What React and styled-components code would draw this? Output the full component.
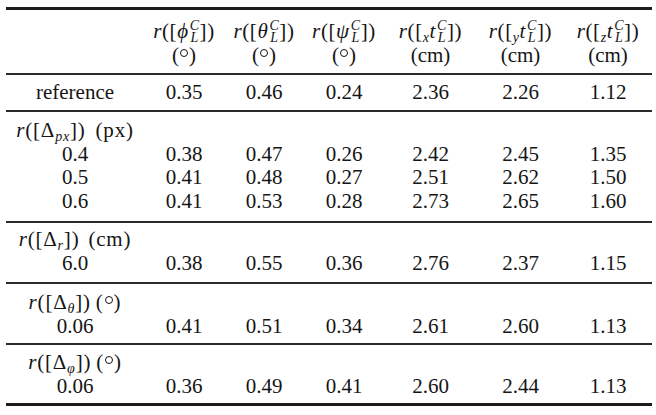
import React from "react";
import styled, { createGlobalStyle } from "styled-components";

const GlobalStyle = createGlobalStyle`
  body {
    margin: 0;
    background: #fff;
    font-family: 'Liberation Serif', 'DejaVu Serif', serif;
  }
`;

const cols = "138px 80px 80px 80px 93px 87px 88px";

const Page = styled.div`
  padding: 7px 0 0 6px;
`;

const Table = styled.div`
  width: 646px;
  border-top: 3px solid #1c1c1c;
  border-bottom: 3px solid #1c1c1c;
  color: #151515;
  font-family: 'Liberation Serif', 'DejaVu Serif', serif;
  font-size: 21px;
`;

const Block = styled.div`
  padding: ${p => p.$pt}px 0 ${p => p.$pb}px 0;
  border-top: ${p => (p.$rule ? "2px solid #2a2a2a" : "none")};
`;

const Row = styled.div`
  display: grid;
  grid-template-columns: ${cols};
  height: ${p => (p.$head ? 48 : 23.5)}px;
  line-height: 23.5px;
  text-align: center;
  white-space: nowrap;
`;

const Cell = styled.div``;

const Label = styled.div`
  letter-spacing: 0.8px;
`;

const HeadCell = styled.div`
  display: flex;
  flex-direction: column;
  align-items: center;
`;

const HeadLine = styled.div`
  height: 24px;
  line-height: 24px;
  letter-spacing: ${p => (p.$math ? 0.6 : 0)}px;
`;

const V = styled.i`
  font-style: italic;
`;

const Sub = styled.span`
  font-size: 14px;
  font-style: italic;
  vertical-align: -4px;
  line-height: 0;
`;

const Scripts = styled.span`
  display: inline-flex;
  flex-direction: column;
  vertical-align: 8px;
  font-size: 14px;
  font-style: italic;
  margin-left: 1px;
  span {
    line-height: 12px;
  }
`;

const Deg = styled.span`
  display: inline-block;
  box-sizing: border-box;
  width: 8px;
  height: 8px;
  border: 1.4px solid currentColor;
  border-radius: 50%;
  vertical-align: 5px;
  margin: 0 1px;
`;

const Unit = styled.span`
  margin-left: ${p => p.$gap}px;
`;

const CL = () => (
  <Scripts>
    <span>C</span>
    <span>L</span>
  </Scripts>
);

const headers = [
  { sym: <V>ϕ</V>, unit: <>(<Deg />)</> },
  { sym: <V>θ</V>, unit: <>(<Deg />)</> },
  { sym: <V>ψ</V>, unit: <>(<Deg />)</> },
  { sym: <><Sub>x</Sub><V>t</V></>, unit: "(cm)" },
  { sym: <><Sub>y</Sub><V>t</V></>, unit: "(cm)" },
  { sym: <><Sub>z</Sub><V>t</V></>, unit: "(cm)" },
];

const groups = [
  {
    sub: "px", unit: "(px)", gap: 10, pt: 7, pb: 8,
    rows: [
      ["0.4", "0.38", "0.47", "0.26", "2.42", "2.45", "1.35"],
      ["0.5", "0.41", "0.48", "0.27", "2.51", "2.62", "1.50"],
      ["0.6", "0.41", "0.53", "0.28", "2.73", "2.65", "1.60"],
    ],
  },
  {
    sub: "r", unit: "(cm)", gap: 9, pt: 5, pb: 7,
    rows: [["6.0", "0.38", "0.55", "0.36", "2.76", "2.37", "1.15"]],
  },
  {
    sub: "θ", unit: <>(<Deg />)</>, gap: 5, pt: 7, pb: 5,
    rows: [["0.06", "0.41", "0.51", "0.34", "2.61", "2.60", "1.13"]],
  },
  {
    sub: "φ", unit: <>(<Deg />)</>, gap: 5, pt: 6, pb: 5,
    rows: [["0.06", "0.36", "0.49", "0.41", "2.60", "2.44", "1.13"]],
  },
];

const reference = ["reference", "0.35", "0.46", "0.24", "2.36", "2.26", "1.12"];

export default function App() {
  return (
    <>
      <GlobalStyle />
      <Page>
        <Table>
          <Block $pt={9} $pb={6}>
            <Row $head>
              <Cell />
              {headers.map((h, i) => (
                <HeadCell key={i}>
                  <HeadLine $math>
                    <V>r</V>([{h.sym}<CL />])
                  </HeadLine>
                  <HeadLine>{h.unit}</HeadLine>
                </HeadCell>
              ))}
            </Row>
          </Block>

          <Block $rule $pt={6} $pb={5.5}>
            <Row>
              {reference.map((v, i) => (
                <Cell key={i}>{v}</Cell>
              ))}
            </Row>
          </Block>

          {groups.map((g, gi) => (
            <Block key={gi} $rule $pt={g.pt} $pb={g.pb}>
              <Row>
                <Label>
                  <V>r</V>([Δ<Sub>{g.sub}</Sub>])
                  <Unit $gap={g.gap}>{g.unit}</Unit>
                </Label>
              </Row>
              {g.rows.map((r, ri) => (
                <Row key={ri}>
                  {r.map((v, i) => (
                    <Cell key={i}>{v}</Cell>
                  ))}
                </Row>
              ))}
            </Block>
          ))}
        </Table>
      </Page>
    </>
  );
}
